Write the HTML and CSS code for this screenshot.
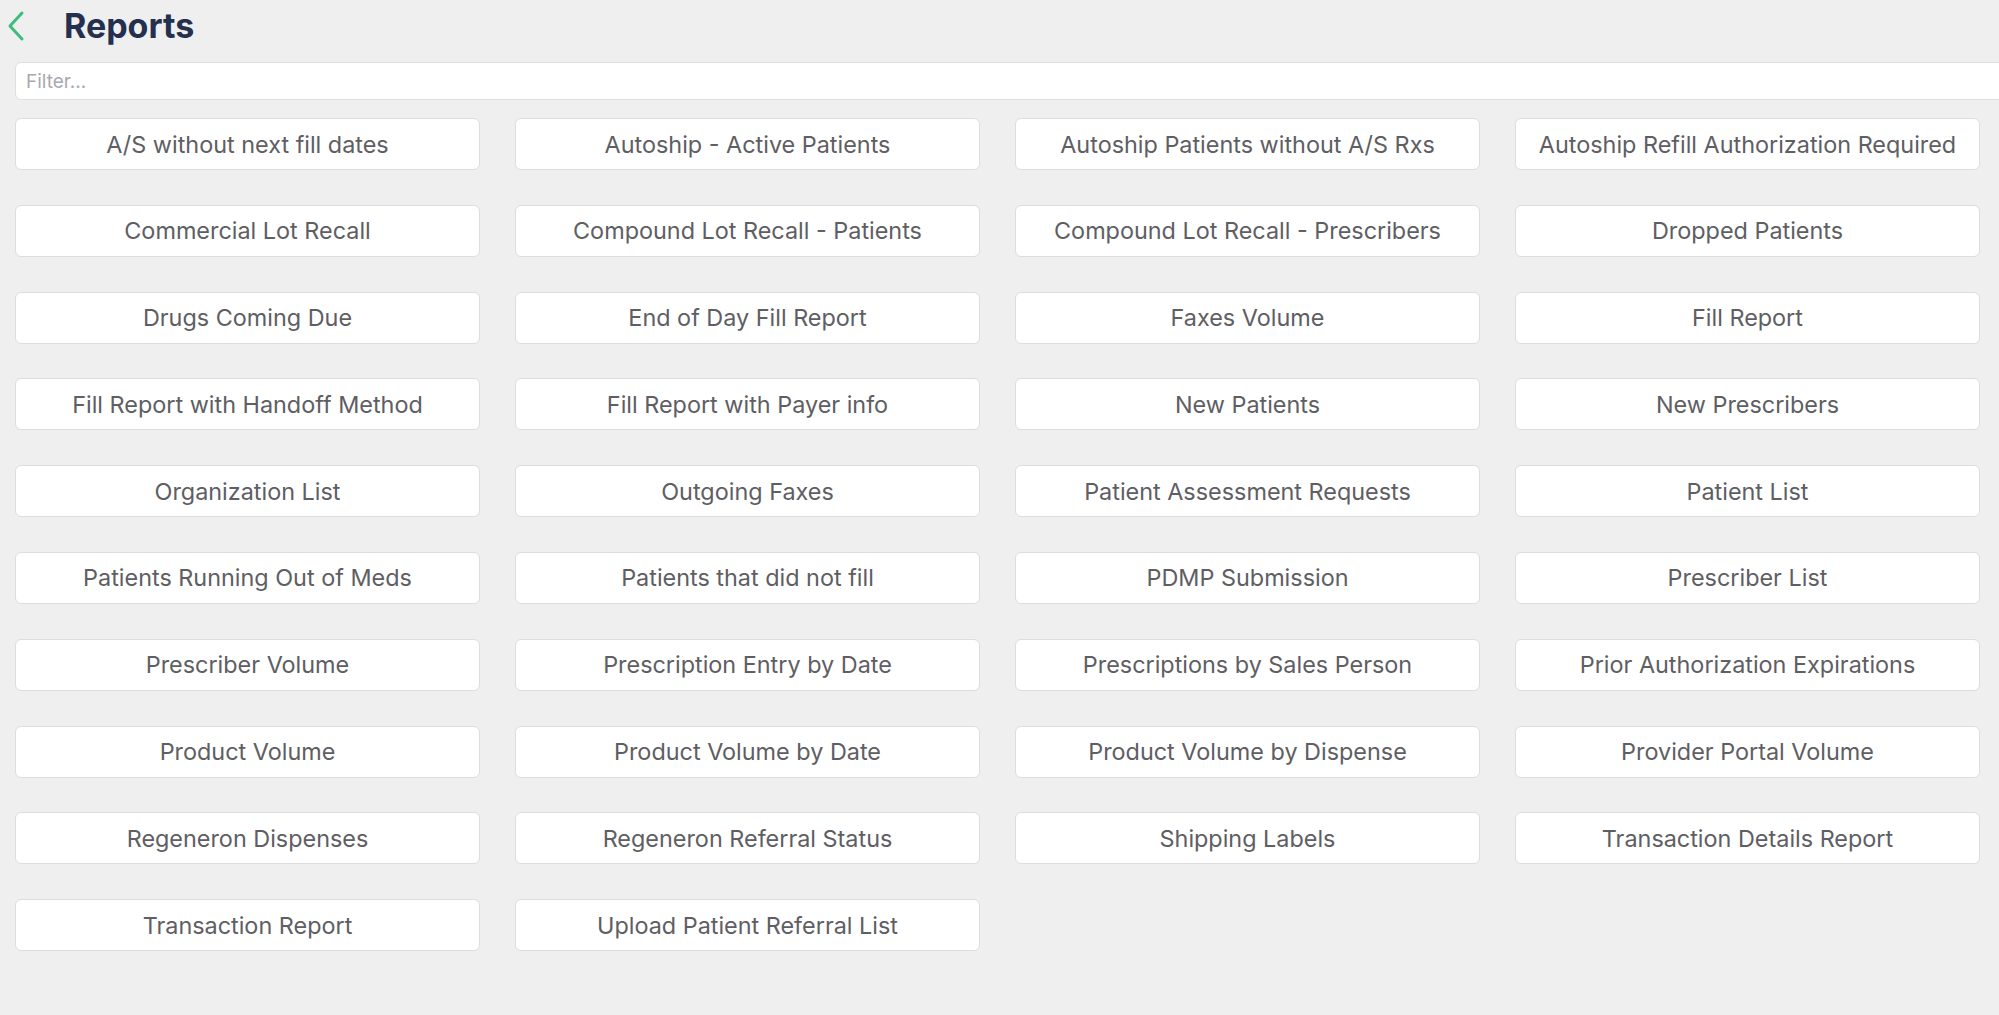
FILE: index.html
```html
<!DOCTYPE html>
<html lang="en">
<head>
<meta charset="utf-8">
<title>Reports</title>
<link rel="stylesheet" href="styles.css">
</head>
<body>
<div class="page">
  <header class="header">
    <button class="back" aria-label="Back">
      <svg width="20" height="32" viewBox="0 0 20 32"><path d="M16 3 L4 16 L16 29" fill="none" stroke="#3dbd7d" stroke-width="3" stroke-linecap="round" stroke-linejoin="round"/></svg>
    </button>
    <h1 class="title">Reports</h1>
  </header>
  <div class="filter-row">
    <input class="filter" type="text" placeholder="Filter...">
  </div>
  <div class="grid">
    <button class="report">A/S without next fill dates</button>
    <button class="report">Autoship - Active Patients</button>
    <button class="report">Autoship Patients without A/S Rxs</button>
    <button class="report">Autoship Refill Authorization Required</button>
    <button class="report">Commercial Lot Recall</button>
    <button class="report">Compound Lot Recall - Patients</button>
    <button class="report">Compound Lot Recall - Prescribers</button>
    <button class="report">Dropped Patients</button>
    <button class="report">Drugs Coming Due</button>
    <button class="report">End of Day Fill Report</button>
    <button class="report">Faxes Volume</button>
    <button class="report">Fill Report</button>
    <button class="report">Fill Report with Handoff Method</button>
    <button class="report">Fill Report with Payer info</button>
    <button class="report">New Patients</button>
    <button class="report">New Prescribers</button>
    <button class="report">Organization List</button>
    <button class="report">Outgoing Faxes</button>
    <button class="report">Patient Assessment Requests</button>
    <button class="report">Patient List</button>
    <button class="report">Patients Running Out of Meds</button>
    <button class="report">Patients that did not fill</button>
    <button class="report">PDMP Submission</button>
    <button class="report">Prescriber List</button>
    <button class="report">Prescriber Volume</button>
    <button class="report">Prescription Entry by Date</button>
    <button class="report">Prescriptions by Sales Person</button>
    <button class="report">Prior Authorization Expirations</button>
    <button class="report">Product Volume</button>
    <button class="report">Product Volume by Date</button>
    <button class="report">Product Volume by Dispense</button>
    <button class="report">Provider Portal Volume</button>
    <button class="report">Regeneron Dispenses</button>
    <button class="report">Regeneron Referral Status</button>
    <button class="report">Shipping Labels</button>
    <button class="report">Transaction Details Report</button>
    <button class="report">Transaction Report</button>
    <button class="report">Upload Patient Referral List</button>
  </div>
</div>
</body>
</html>
```
FILE: styles.css
```css
html, body {
  margin: 0;
  padding: 0;
  background: #efeff0;
  overflow: hidden;
  font-family: Inter, "Liberation Sans", Arial, sans-serif;
}

.page {
  width: 1999px;
  height: 1015px;
  padding: 0 0 0 15px;
  box-sizing: border-box;
}

.header {
  display: flex;
  align-items: center;
  height: 54px;
  margin-left: -10px;
}

.back {
  display: flex;
  align-items: center;
  justify-content: center;
  border: none;
  background: transparent;
  padding: 0;
  width: 22px;
  height: 32px;
  margin-top: -2px;
}

.title {
  margin: -3px 0 0 37px;
  font-size: 34px;
  font-weight: 700;
  color: #25304f;
  letter-spacing: 0;
  line-height: 1;
}

.filter-row {
  margin-top: 8px;
  margin-right: -40px;
}

.filter {
  display: block;
  width: 100%;
  height: 38px;
  box-sizing: border-box;
  border: 1px solid #dedee5;
  border-radius: 6px;
  background: #fff;
  padding: 0 10px;
  font-family: inherit;
  font-size: 19px;
  color: #333;
  outline: none;
}

.filter::placeholder {
  color: #a9a9b0;
}

.grid {
  display: grid;
  grid-template-columns: repeat(4, 465px);
  column-gap: 35px;
  row-gap: 34.8px;
  margin-top: 18px;
}

.report {
  height: 52px;
  box-sizing: border-box;
  background: #fff;
  border: 1px solid #dcdce3;
  border-radius: 6px;
  font-family: inherit;
  font-size: 23.4px;
  color: #5e5e63;
  padding: 0;
  text-align: center;
  cursor: pointer;
}
```
